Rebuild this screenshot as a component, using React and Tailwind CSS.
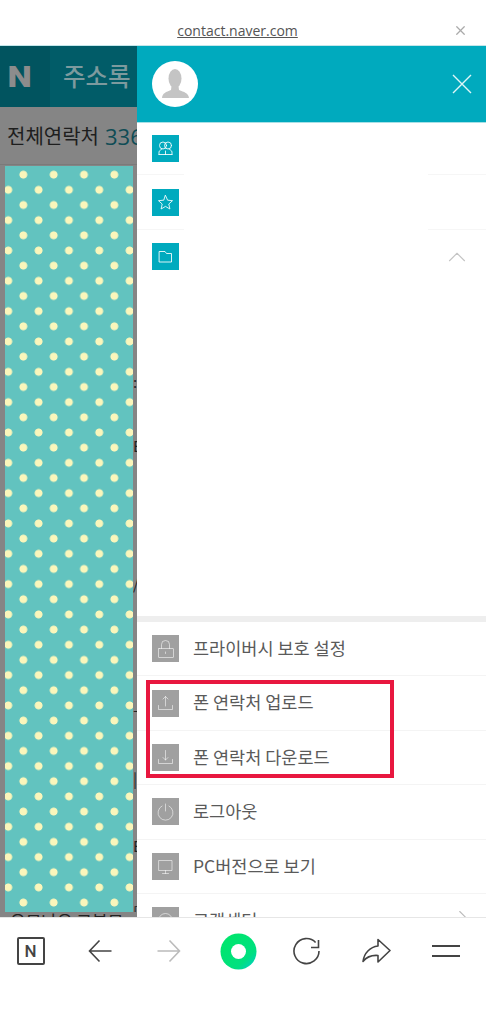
import { X, ChevronUp, ChevronRight } from 'lucide-react';

const KR = 'font-["Noto_Sans_CJK_KR","Noto_Sans",sans-serif]';

const IconBox = ({ color, opacity, children }) => (
  <div className={`w-[27px] h-[27px] shrink-0 flex items-center justify-center ${color}`}>
    <svg width="27" height="27" viewBox="0 0 27 27" fill="none" stroke="#ffffff" strokeOpacity={opacity} strokeWidth="1" strokeLinecap="round" strokeLinejoin="round">
      {children}
    </svg>
  </div>
);

const TopRow = ({ children, line = true }) => (
  <div className="h-[54.4px] pl-[15px] flex items-center relative">
    <IconBox color="bg-[#00aabe]" opacity="0.85">{children}</IconBox>
    {line && (
      <div className="absolute left-0 right-0 bottom-0 h-px flex justify-between">
        <div className="w-[47px] bg-[#f6f6f6]" />
        <div className="w-[58px] bg-[#f6f6f6]" />
      </div>
    )}
  </div>
);

const MenuRow = ({ label, children, chevron }) => (
  <div className="h-[54.4px] shrink-0 pl-[15px] flex items-center gap-[14px] border-b border-[#f4f4f4] relative">
    <IconBox color="bg-[#a0a0a0]" opacity="0.55">{children}</IconBox>
    <span className={`text-[17.5px] text-[#5a5a5a] leading-none -mt-[2px] ${KR}`}>{label}</span>
    {chevron && <ChevronRight size={26} strokeWidth={1} className="absolute right-[10px] top-[11px] text-[#bbbbbb]" />}
  </div>
);

export default function App() {
  return (
    <div className="w-[486px] h-[1024px] bg-white flex flex-col overflow-hidden">
      {/* browser top bar */}
      <div className="h-[46px] shrink-0 relative flex items-center justify-center pt-[15px] border-b border-[#c4e6ea]">
        <span className='text-[14px] text-[#555555] underline font-["Open_Sans",sans-serif] ml-[-11px]'>contact.naver.com</span>
        <X size={15} strokeWidth={2} className="absolute right-[18px] top-[23px] text-[#aaaaaa]" />
      </div>

      <div className="h-[871px] shrink-0 flex overflow-hidden">
        {/* dimmed page behind the drawer */}
        <div className="w-[137px] shrink-0 bg-[#858585] flex flex-col overflow-hidden">
          <div className="h-[61px] shrink-0 bg-[#015c68] flex items-center overflow-hidden">
            <div className="w-[50px] h-full bg-[#01545f] flex items-center justify-center pr-[10px]">
              <span className='text-[30px] leading-none font-black text-[#8c8c8c] scale-x-115 font-["Roboto",sans-serif]'>N</span>
            </div>
            <span className={`ml-[13px] text-[24.5px] leading-none font-medium text-[#7d9a9e] whitespace-nowrap ${KR}`}>주소록</span>
          </div>
          <div className="h-[58px] shrink-0 border-b border-[#7a7a7a] flex items-center pl-[7px] whitespace-nowrap overflow-hidden">
            <span className={`text-[20px] leading-none text-[#1e1e1e] ${KR}`}>전체연락처</span>
            <span className='ml-[6px] text-[22px] leading-none text-[#0f4c55] font-["Open_Sans",sans-serif]'>336</span>
          </div>
          <div className="flex-1 min-h-0 flex flex-col pt-px overflow-hidden">
            <div className="h-[746px] shrink-0 flex">
              <div className="w-[5px] shrink-0" />
              <div className="w-[128px] shrink-0 bg-[#62c3bf] bg-[radial-gradient(circle,#faf6bb_3.6px,transparent_4.3px),radial-gradient(circle,#faf6bb_3.6px,transparent_4.3px)] bg-[length:30.33px_30.33px] [background-position:3.2px_-6.5px,-11.9px_8.7px]" />
              <div className='w-[4px] shrink-0 relative overflow-hidden text-[15px] leading-none text-[#222222] font-["Noto_Sans_CJK_KR",sans-serif]'>
                <span className="absolute left-0 top-[208px]">:</span>
                <span className="absolute left-0 top-[272px]">E</span>
                <span className="absolute left-0 top-[410px]">/</span>
                <span className="absolute left-0 top-[535px]">ㅗ</span>
                <span className="absolute left-0 top-[605px]">|</span>
                <span className="absolute left-0 top-[672px]">E</span>
                <span className="absolute left-0 top-[738px]">[</span>
              </div>
            </div>
            <span className={`pl-[10px] text-[17px] leading-none text-[#222222] whitespace-nowrap ${KR}`}>우모나우 고부모</span>
          </div>
        </div>

        {/* drawer */}
        <div className="flex-1 min-w-0 bg-white flex flex-col relative">
          <div className="h-[77px] shrink-0 bg-[#00aabe] border-b border-[#a8e0e6] flex items-center justify-between pl-[15px] pr-[14px]">
            <div className="w-[46px] h-[46px] rounded-full bg-white overflow-hidden">
              <svg width="46" height="46" viewBox="0 0 46 46" fill="#c4c4c4">
                <ellipse cx="23" cy="17.5" rx="6.5" ry="9.5" />
                <path d="M19.5 25 L26.5 25 L27 29 C32 31 36.5 32 37 37 L10 37 C10.5 32 14 31 19 29 Z" />
              </svg>
            </div>
            <svg width="20" height="20" viewBox="0 0 20 20" stroke="#dff6f8" strokeWidth="1.4">
              <path d="M1 1 L19 19 M19 1 L1 19" />
            </svg>
          </div>

          <div className="flex-1 min-h-0 relative -mt-[2px]">
            <TopRow>
              <circle cx="11" cy="10.5" r="3.5" />
              <circle cx="16" cy="10.5" r="3.5" />
              <path d="M7 19.5 v-2.5 c0-1.5 2-2 3-3 M20 19.5 v-2.5 c0-1.5-2-2-3-3 M7 19.5 H20 M13.5 19.5 v-3.5" />
            </TopRow>
            <TopRow>
              <path d="M13.5 6.5 L15.6 11.2 L20.5 11.7 L16.8 15 L17.9 20 L13.5 17.4 L9.1 20 L10.2 15 L6.5 11.7 L11.4 11.2 Z" />
            </TopRow>
            <TopRow line={false}>
              <path d="M7.5 8.5 H13 L14.5 10.5 H19.5 V19 H7.5 Z" />
            </TopRow>
            <ChevronUp size={30} strokeWidth={0.9} className="absolute right-[14px] top-[121px] text-[#c4c4c4]" />
          </div>

          <div className="h-[6px] shrink-0 bg-[#eeeeee]" />
          <div className="h-[295px] shrink-0 flex flex-col overflow-hidden relative">
            <MenuRow label="프라이버시 보호 설정">
              <rect x="6.5" y="13.5" width="15" height="9" rx="0.5" />
              <path d="M9.5 13.5 V9.5 a4 4 0 0 1 8 0 V13.5 M13.5 17 v1.5" />
            </MenuRow>
            <MenuRow label="폰 연락처 업로드">
              <path d="M13.5 16 V6.5 M11 9 L13.5 6.5 L16 9 M6.5 15.5 V19.5 H20.5 V15.5" />
            </MenuRow>
            <MenuRow label="폰 연락처 다운로드">
              <path d="M13.5 6.5 V16 M11 13.5 L13.5 16 L16 13.5 M6.5 15.5 V19.5 H20.5 V15.5" />
            </MenuRow>
            <MenuRow label="로그아웃">
              <path d="M13.5 6 V13 M10 8 a7.5 7.5 0 1 0 7 0" />
            </MenuRow>
            <MenuRow label="PC버전으로 보기">
              <rect x="7" y="7.5" width="13" height="10" />
              <path d="M13.5 17.5 V20.5 M10.5 20.5 H16.5" />
            </MenuRow>
            <MenuRow label="고객센터" chevron>
              <circle cx="13.5" cy="13.5" r="7" />
              <path d="M13.5 10.5 V14" />
            </MenuRow>
            {/* red highlight drawn on the screenshot */}
            <div className="absolute left-[8.5px] top-[57.5px] w-[248px] h-[98px] border-[4px] border-[#e8173f]" />
          </div>
        </div>
      </div>

      {/* browser bottom bar */}
      <div className="flex-1 bg-white border-t border-[#e6e6e6]">
        <div className="w-[484.4px] ml-[-4px] grid grid-cols-7 pt-[14px]">
          <div className="h-[38px] flex items-center justify-center">
            <div className='w-[28px] h-[28px] border-2 border-[#444444] rounded-[2px] flex items-center justify-center text-[17px] leading-none font-medium text-[#444444] font-["Roboto",sans-serif]'>N</div>
          </div>
          <div className="h-[38px] flex items-center justify-center">
            <svg width="24" height="24" viewBox="0 0 24 24" fill="none" stroke="#444444" strokeWidth="1.6">
              <path d="M23.5 12 H1.5 M11.5 1.5 L1.5 12 L11.5 22.5" />
            </svg>
          </div>
          <div className="h-[38px] flex items-center justify-center">
            <svg width="24" height="24" viewBox="0 0 24 24" fill="none" stroke="#bbbbbb" strokeWidth="1.6">
              <path d="M0.5 12 H22.5 M12.5 1.5 L22.5 12 L12.5 22.5" />
            </svg>
          </div>
          <div className="h-[38px] flex items-center justify-center">
            <svg width="37" height="37" viewBox="0 0 37 37" className="mt-[1px]">
              <defs>
                <linearGradient id="ring" x1="0.2" y1="0.2" x2="0.9" y2="0.95">
                  <stop offset="0" stopColor="#00e56e" />
                  <stop offset="0.7" stopColor="#00e080" />
                  <stop offset="1" stopColor="#00cfc0" />
                </linearGradient>
              </defs>
              <circle cx="18.5" cy="18.5" r="18" fill="url(#ring)" />
              <circle cx="18.5" cy="18.5" r="7.5" fill="#ffffff" />
            </svg>
          </div>
          <div className="h-[38px] flex items-center justify-center">
            <svg width="28" height="28" viewBox="0 0 28 28" fill="none" stroke="#444444" strokeWidth="1.6">
              <path d="M26 14 a12.5 12.5 0 1 1 -3.4 -8.5" />
              <path d="M25.5 3 V10.5 H18" />
            </svg>
          </div>
          <div className="h-[38px] flex items-center justify-center">
            <svg width="29" height="26" viewBox="0 0 29 26" fill="none" stroke="#444444" strokeWidth="1.6" strokeLinejoin="round">
              <path d="M16 1.5 L28 12.5 L16 24 V17.5 C10 17 5 18.5 1 23.5 C2 15 8 9 16 8 Z" />
            </svg>
          </div>
          <div className="h-[38px] flex items-center justify-center">
            <div className="w-[28px] h-[12px] border-y-2 border-[#444444]" />
          </div>
        </div>
      </div>
    </div>
  );
}
